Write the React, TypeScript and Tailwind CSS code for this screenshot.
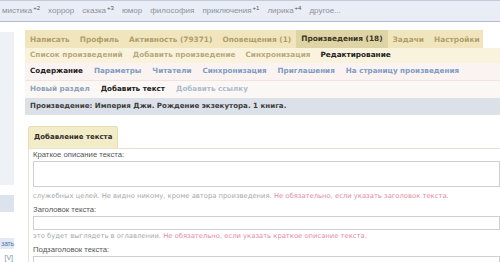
import React from 'react';

const genres: { name: string; sup?: string }[] = [
  { name: 'мистика', sup: '+2' },
  { name: 'хоррор' },
  { name: 'сказка', sup: '+3' },
  { name: 'юмор' },
  { name: 'философия' },
  { name: 'приключения', sup: '+1' },
  { name: 'лирика', sup: '+4' },
  { name: 'другое...' },
];

const mainTabs = ['Написать', 'Профиль', 'Активность (79371)', 'Оповещения (1)', 'Произведения (18)', 'Задачи', 'Настройки'];
const workTabs = ['Список произведений', 'Добавить произведение', 'Синхронизация', 'Редактирование'];
const editTabs = ['Содержание', 'Параметры', 'Читатели', 'Синхронизация', 'Приглашения', 'На страницу произведения'];

const App: React.FC = () => {
  return (
    <div className="w-[500px] h-[262px] overflow-hidden bg-white font-['DejaVu_Sans',sans-serif] text-[8px]">
      {/* Genre bar */}
      <div className="h-[22px] bg-[#e9edf5] border-t border-[#c5cbd8] border-b border-b-[#b4bac8] flex items-center gap-[8px] pl-[2px] font-['Liberation_Sans',sans-serif] text-[8px] text-[#8d929c] whitespace-nowrap">
        {genres.map((g) => (
          <span key={g.name}>
            {g.name}
            {g.sup && <sup className="text-[6px] text-[#555] ml-[1px] -top-[3px]">{g.sup}</sup>}
          </span>
        ))}
      </div>

      <div className="flex mt-[8px]">
        {/* Left sidebar remains */}
        <div className="w-[14px] shrink-0 flex flex-col">
          <div className="h-[153px] mt-[2px] bg-[#eef1f6]" />
          <div className="h-[17px] mt-[10px] bg-[#dde3ec]" />
          <div className="mt-[26px] h-[11px] bg-[#e3e9f2] text-[#4a78b0] font-['Liberation_Sans',sans-serif] text-[6.5px] leading-[11px] whitespace-nowrap flex justify-end">
            зать
          </div>
          <div className="mt-[4px] text-[#7890b0] font-['Liberation_Sans',sans-serif] text-[7px] leading-[9px] text-right pr-[1px]">[V]</div>
        </div>

        {/* Main */}
        <div className="ml-[11px] flex-1 min-w-0">
          {/* Main tabs */}
          <div className="flex items-end h-[18px] w-[458px] bg-[#f0e5bd] font-bold text-[7.4px] text-[#b09f6e] whitespace-nowrap">
            {mainTabs.map((t) =>
              t.startsWith('Произведения') ? (
                <span key={t} className="h-[18px] px-[5px] bg-[#dfd4a5] text-[#3b3424] flex items-center">
                  {t}
                </span>
              ) : (
                <span key={t} className="h-[16px] px-[5px] flex items-center">
                  {t}
                </span>
              ),
            )}
          </div>

          {/* Work tabs */}
          <div className="h-[15px] bg-[#f9f3de] flex items-center gap-[10px] pl-[5px] font-bold text-[7.3px] text-[#bba97a] whitespace-nowrap">
            {workTabs.map((t) => (
              <span key={t} className={t === 'Редактирование' ? 'text-[#222]' : ''}>
                {t}
              </span>
            ))}
          </div>

          {/* Edit tabs */}
          <div className="h-[18px] bg-[#fbf3f1] border-b border-[#f3e3df] flex items-center gap-[11px] pl-[5px] font-bold text-[7.2px] text-[#7f9cc3] whitespace-nowrap">
            {editTabs.map((t) => (
              <span key={t} className={t === 'Содержание' ? 'text-[#1e1e1e]' : ''}>
                {t}
              </span>
            ))}
          </div>

          {/* Section tabs */}
          <div className="h-[17px] bg-[#fbf7f5] flex items-center gap-[11px] pl-[5px] font-bold text-[7.2px] whitespace-nowrap">
            <span className="text-[#8ea2ba]">Новый раздел</span>
            <span className="text-[#222]">Добавить текст</span>
            <span className="text-[#aebbcd]">Добавить ссылку</span>
          </div>

          {/* Work title */}
          <div className="h-[17px] bg-[#dce1e9] flex items-center pl-[5px] font-bold text-[7.1px] text-[#3d3d3d] whitespace-nowrap">
            Произведение: Империя Джи. Рождение экзекутора. 1 книга.
          </div>

          {/* Form */}
          <div className="mt-[11px] ml-[3px]">
            <div className="inline-flex h-[22px] items-center px-[5px] bg-[#f3ecc8] border border-b-0 border-[#e6dcae] rounded-t-[3px] font-bold text-[7px] text-[#2c2c2c]">
              Добавление текста
            </div>
            <div className="border-l border-t border-[#e6e2d4] pl-[4px] pt-[1px] text-[#555] whitespace-nowrap">
              <div className="leading-[10px] text-[7.7px] font-['Liberation_Sans',sans-serif]">Краткое описание текста:</div>
              <div className="mt-[1px] h-[26px] border border-[#cfcfcf] bg-white" />
              <div className="mt-[4px] leading-[10px] text-[6.8px] text-[#a9a9a9]">
                служебных целей. Не видно никому, кроме автора произведения.{' '}
                <span className="text-[#e58aa6]">Не обязательно, если указать заголовок текста.</span>
              </div>
              <div className="mt-[4px] leading-[10px] text-[7.7px] font-['Liberation_Sans',sans-serif]">Заголовок текста:</div>
              <div className="mt-[1px] h-[14px] border border-[#cfcfcf] bg-white" />
              <div className="mt-[1px] leading-[10px] text-[6.8px] text-[#a9a9a9]">
                это будет выглядеть в оглавлении.{' '}
                <span className="text-[#e58aa6]">Не обязательно, если указать краткое описание текста.</span>
              </div>
              <div className="mt-[4px] leading-[10px] text-[7.7px] font-['Liberation_Sans',sans-serif]">Подзаголовок текста:</div>
              <div className="mt-[1px] h-[14px] border border-[#cfcfcf] bg-white" />
            </div>
          </div>
        </div>
      </div>
    </div>
  );
};

export default App;
